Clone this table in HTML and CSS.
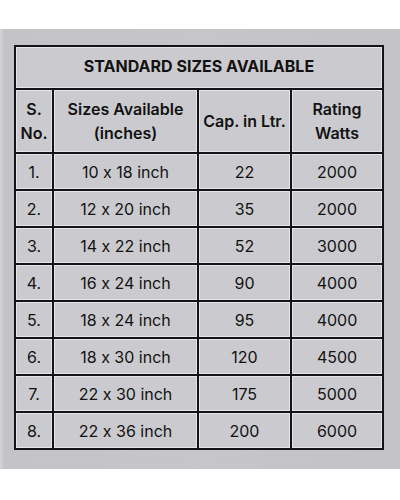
FILE: index.html
```html
<!DOCTYPE html>
<html>
<head>
<meta charset="utf-8">
<link rel="stylesheet" href="styles.css">
</head>
<body>
<div class="panel">
  <div class="table">
    <div class="cell title">STANDARD SIZES AVAILABLE</div>
    <div class="cell head">S.<br>No.</div>
    <div class="cell head">Sizes Available<br>(inches)</div>
    <div class="cell head">Cap. in Ltr.</div>
    <div class="cell head">Rating<br>Watts</div>

    <div class="cell">1.</div><div class="cell">10 x 18 inch</div><div class="cell">22</div><div class="cell">2000</div>
    <div class="cell">2.</div><div class="cell">12 x 20 inch</div><div class="cell">35</div><div class="cell">2000</div>
    <div class="cell">3.</div><div class="cell">14 x 22 inch</div><div class="cell">52</div><div class="cell">3000</div>
    <div class="cell">4.</div><div class="cell">16 x 24 inch</div><div class="cell">90</div><div class="cell">4000</div>
    <div class="cell">5.</div><div class="cell">18 x 24 inch</div><div class="cell">95</div><div class="cell">4000</div>
    <div class="cell">6.</div><div class="cell">18 x 30 inch</div><div class="cell">120</div><div class="cell">4500</div>
    <div class="cell">7.</div><div class="cell">22 x 30 inch</div><div class="cell">175</div><div class="cell">5000</div>
    <div class="cell">8.</div><div class="cell">22 x 36 inch</div><div class="cell">200</div><div class="cell">6000</div>
  </div>
</div>
</body>
</html>
```
FILE: styles.css
```css
html, body {
  margin: 0;
  padding: 0;
  background: #ffffff;
}
body {
  width: 400px;
  height: 500px;
  overflow: hidden;
  font-family: Inter, "Liberation Sans", sans-serif;
  font-feature-settings: "calt" 0;
  color: #121212;
}
.panel {
  margin-top: 29px;
  height: 440px;
  box-sizing: border-box;
  padding: 16px 0 0 14px;
  background: linear-gradient(90deg, #d4d4d8 0, #c4c4c8 4px, #c6c6ca 50%, #c3c3c7 100%);
}
.table {
  display: grid;
  grid-template-columns: 36px 143px 91px 90px;
  grid-template-rows: 41px 62px repeat(8, 35px);
  gap: 2px;
  padding: 2px;
  width: max-content;
  background: #141414;
}
.cell {
  display: flex;
  align-items: center;
  justify-content: center;
  text-align: center;
  background: #cbcbcf;
  box-shadow: inset 0 0 0 1px #e6e6ea;
  font-size: 16px;
  line-height: 1;
}
.title {
  grid-column: 1 / span 4;
  font-weight: 700;
  font-size: 16px;
  padding-bottom: 3px;
}
.head {
  font-weight: 600;
  font-size: 16px;
  line-height: 24px;
}
```
